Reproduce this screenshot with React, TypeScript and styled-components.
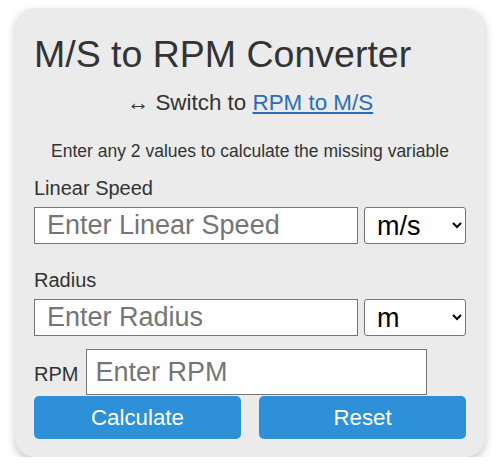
import React from 'react';
import styled, { createGlobalStyle } from 'styled-components';

const GlobalStyle = createGlobalStyle`
  body {
    margin: 0;
    background: #ffffff;
    font-family: 'Liberation Sans', Arial, sans-serif;
    color: #333333;
  }
`;

const Card = styled.div`
  width: 470px;
  box-sizing: border-box;
  margin: 8px 0 0 15px;
  padding: 24px 19px 18px;
  background-color: #eaebea;
  border-radius: 20px;
  box-shadow: 0 4px 10px rgba(0, 0, 0, 0.22);
`;

const Title = styled.h1`
  margin: 0;
  font-size: 37.5px;
  font-weight: 400;
  line-height: 44px;
  color: #333333;
`;

const Switch = styled.p`
  margin: 13px 0 0;
  font-size: 22.4px;
  line-height: 28px;
  text-align: center;

  a {
    color: #2b6cb8;
    text-decoration: underline;
  }
`;

const Hint = styled.p`
  margin: 23px 0 0;
  font-size: 17.5px;
  line-height: 22px;
  text-align: center;
`;

const Label = styled.label<{ $gap: number }>`
  display: block;
  margin: ${(p) => p.$gap}px 0 7px;
  font-size: 20px;
  line-height: 24px;
`;

const Row = styled.div`
  display: flex;
  gap: 6px;
`;

const TextInput = styled.input`
  box-sizing: border-box;
  width: 324px;
  height: 37px;
  margin: 0;
  padding: 0 12px;
  border: 1px solid #767676;
  border-radius: 0;
  background: #ffffff;
  font-family: 'Liberation Sans', Arial, sans-serif;
  font-size: 27px;
  color: #000000;

  &::placeholder {
    color: #757575;
  }
`;

const UnitSelect = styled.select`
  box-sizing: border-box;
  width: 102px;
  height: 37px;
  margin: 0;
  padding: 0 0 0 8px;
  border: 1px solid #767676;
  border-radius: 3px;
  background: #ffffff;
  font-family: 'Liberation Sans', Arial, sans-serif;
  font-size: 27px;
  color: #000000;
`;

const RpmRow = styled.div`
  display: flex;
  align-items: baseline;
  gap: 8px;
  margin-top: 13px;

  label {
    font-size: 20px;
  }
`;

const RpmInput = styled(TextInput)`
  width: 341px;
  height: 46px;
  padding: 0 8px;
`;

const Buttons = styled.div`
  display: flex;
  justify-content: space-between;
  margin-top: 1px;
`;

const Button = styled.button`
  width: 207px;
  height: 43px;
  border: none;
  border-radius: 5px;
  background-color: #2e90d8;
  color: #ffffff;
  font-family: 'Liberation Sans', Arial, sans-serif;
  font-size: 22.3px;
  cursor: pointer;
`;

const App: React.FC = () => {
  return (
    <>
      <GlobalStyle />
      <Card>
        <Title>M/S to RPM Converter</Title>
        <Switch>
          ↔ Switch to <a href='#'>RPM to M/S</a>
        </Switch>
        <Hint>Enter any 2 values to calculate the missing variable</Hint>

        <Label $gap={14} htmlFor='speed'>Linear Speed</Label>
        <Row>
          <TextInput id='speed' placeholder='Enter Linear Speed' />
          <UnitSelect defaultValue='ms'>
            <option value='ms'>m/s</option>
            <option value='kmh'>km/h</option>
            <option value='mph'>mph</option>
          </UnitSelect>
        </Row>

        <Label $gap={24} htmlFor='radius'>Radius</Label>
        <Row>
          <TextInput id='radius' placeholder='Enter Radius' />
          <UnitSelect defaultValue='m'>
            <option value='m'>m</option>
            <option value='cm'>cm</option>
            <option value='mm'>mm</option>
          </UnitSelect>
        </Row>

        <RpmRow>
          <label htmlFor='rpm'>RPM</label>
          <RpmInput id='rpm' placeholder='Enter RPM' />
        </RpmRow>

        <Buttons>
          <Button>Calculate</Button>
          <Button>Reset</Button>
        </Buttons>
      </Card>
    </>
  );
};

export default App;
